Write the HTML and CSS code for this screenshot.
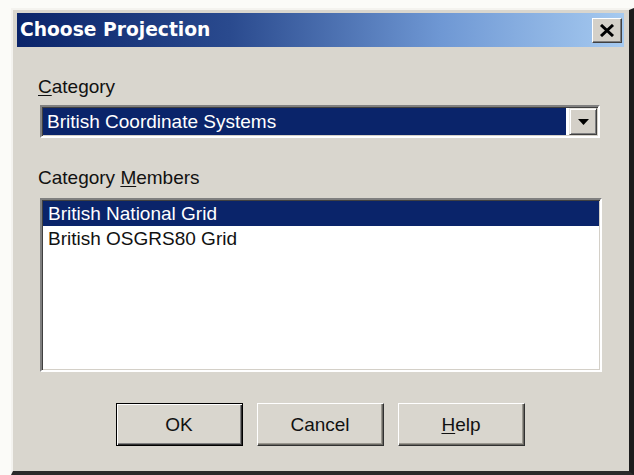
FILE: index.html
```html
<!DOCTYPE html>
<html>
<head>
<meta charset="utf-8">
<title>Choose Projection</title>
<link rel="stylesheet" href="styles.css">
</head>
<body>
<div class="window">
  <div class="titlebar">
    <span class="title">Choose Projection</span>
    <div class="close">
      <svg width="16" height="13" viewBox="0 0 16 13"><path d="M2 1 L14 12 M14 1 L2 12" stroke="#000" stroke-width="3" fill="none"/></svg>
    </div>
  </div>
  <div class="content">
    <div class="label"><u>C</u>ategory</div>
    <div class="combo">
      <div class="combo-value">British Coordinate Systems</div>
      <div class="combo-btn">
        <svg width="11" height="6" viewBox="0 0 11 6"><polygon points="0,0 11,0 5.5,6" fill="#000"/></svg>
      </div>
    </div>
    <div class="label label-members">Category <u>M</u>embers</div>
    <div class="listbox">
      <div class="item selected">British National Grid</div>
      <div class="item">British OSGRS80 Grid</div>
    </div>
    <div class="buttons">
      <div class="btn btn-default">OK</div>
      <div class="btn">Cancel</div>
      <div class="btn"><u>H</u>elp</div>
    </div>
  </div>
</div>
</body>
</html>
```
FILE: styles.css
```css
* { box-sizing: border-box; }

html, body { margin: 0; }

body {
  width: 634px;
  height: 475px;
  overflow: hidden;
  background: #fbfbf8;
  font-family: "Liberation Sans", Arial, sans-serif;
  font-size: 19px;
  color: #111;
}

/* dialog frame */
.window {
  margin: 8px 0 0 11px;
  width: 623px;
  height: 467px;
  background: #d9d6ce;
  border-style: solid;
  border-width: 2px 5px 4px 2px;
  border-color: #f4f3ef #1c1c1c #2a2a2a #f4f3ef;
  padding: 3px 5px 0 4px;
  display: flex;
  flex-direction: column;
}

.titlebar {
  height: 34px;
  display: flex;
  align-items: center;
  justify-content: space-between;
  background: linear-gradient(to right, #0a246a 0%, #2a4a8e 35%, #6f98d4 70%, #a6caf0 100%);
  padding: 0 2px 0 3px;
}

.title {
  color: #fff;
  font-family: "DejaVu Sans", sans-serif;
  font-weight: bold;
  font-size: 18.7px;
  line-height: 34px;
}

.close {
  width: 30px;
  height: 25px;
  background: #d4d0c8;
  border: 1px solid;
  border-color: #fff #404040 #404040 #fff;
  box-shadow: inset -1px -1px #808080;
  display: flex;
  align-items: center;
  justify-content: center;
}

.content {
  padding: 29px 22px 0 21px;
  display: flex;
  flex-direction: column;
}

.label {
  height: 22px;
  line-height: 22px;
}

.label u,
.btn u {
  text-underline-offset: 2px;
}

.label-members { margin-top: 29px; }

/* drop-down combo */
.combo {
  margin: 7px 2px 0 2px;
  height: 33px;
  display: flex;
  background: #fff;
  padding: 1px;
  border: 2px solid;
  border-color: #808080 #fff #fff #808080;
  box-shadow: inset 1px 1px #404040, inset -1px -1px #d4d0c8;
}

.combo-value {
  flex: 1;
  background: #0a246a;
  color: #fff;
  line-height: 28px;
  padding-left: 4px;
  margin-right: 3px;
}

.combo-btn {
  width: 28px;
  background: #d4d0c8;
  border: 1px solid;
  border-color: #e8e6e0 #404040 #404040 #e8e6e0;
  box-shadow: inset 1px 1px #fff, inset -1px -1px #808080;
  display: flex;
  align-items: center;
  justify-content: center;
}

/* list box */
.listbox {
  margin: 9px 0 0 2px;
  height: 174px;
  background: #fff;
  padding: 1px;
  border: 2px solid;
  border-color: #808080 #fff #fff #808080;
  box-shadow: inset 1px 1px #404040, inset -1px -1px #d4d0c8;
}

.item {
  height: 25px;
  line-height: 24px;
  padding: 1px 0 0 5px;
}

.item.selected {
  background: #0a246a;
  color: #fff;
}

/* push buttons */
.buttons {
  margin-top: 31px;
  display: flex;
  justify-content: center;
  gap: 14px;
}

.btn {
  width: 127px;
  height: 43px;
  display: flex;
  align-items: center;
  justify-content: center;
  background: #d9d6ce;
  border: 1px solid;
  border-color: #fff #303030 #303030 #fff;
  box-shadow: inset -1px -1px #6a6862, inset -2px -2px #9a978f;
}

.btn-default {
  border: 1px solid #000;
  box-shadow: inset 1px 1px #fff, inset -1px -1px #303030, inset -2px -2px #808080;
}
```
